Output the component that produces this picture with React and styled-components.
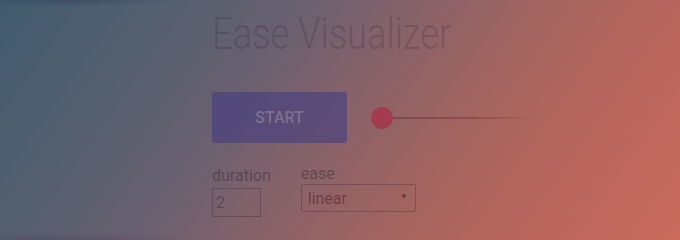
import React from "react";
import styled, { createGlobalStyle } from "styled-components";

const GlobalStyle = createGlobalStyle`
  html, body {
    margin: 0;
    padding: 0;
  }
  body {
    font-family: "Roboto", "Liberation Sans", sans-serif;
  }
`;

const Page = styled.main`
  box-sizing: border-box;
  width: 100%;
  height: 240px;
  overflow: hidden;
  padding: 8px 0 0 212px;
  background:
    radial-gradient(ellipse 110px 6px at 70px 0px, rgba(35, 40, 75, 0.3), transparent),
    radial-gradient(ellipse 150px 8px at 60px 240px, rgba(70, 45, 75, 0.25), transparent),
    linear-gradient(125deg, #405a6e 0%, #55606f 20%, #686070 35%, #886269 50%, #a3645f 65%, #b8665d 80%, #c96a5c 100%);
`;

const Title = styled.h1`
  margin: 0 0 32px 0;
  font-size: 44px;
  line-height: 52px;
  font-weight: 300;
  color: rgba(40, 35, 55, 0.22);
  transform: scaleX(0.825);
  transform-origin: left center;
  white-space: nowrap;
`;

const ControlRow = styled.div`
  display: flex;
  align-items: center;
  gap: 24px;
`;

const StartButton = styled.button`
  width: 135px;
  height: 51px;
  border: none;
  border-radius: 3px;
  background: rgba(66, 60, 130, 0.6);
  color: rgba(160, 145, 160, 0.55);
  font-family: "Roboto", "Liberation Sans", sans-serif;
  font-size: 16px;
  font-weight: 500;
  text-transform: uppercase;
`;

const Track = styled.div`
  display: flex;
  align-items: center;
`;

const Knob = styled.span`
  width: 22px;
  height: 22px;
  border-radius: 50%;
  background: #a43c50;
`;

const Rail = styled.span`
  width: 145px;
  height: 2px;
  background: linear-gradient(90deg, rgba(110, 40, 60, 0.5), rgba(110, 40, 60, 0.35) 60%, transparent);
`;

const Fields = styled.div`
  display: flex;
  align-items: flex-start;
  gap: 30px;
  margin-top: 23px;
`;

const Field = styled.label`
  display: flex;
  flex-direction: column;
  margin-top: ${(p) => p.$lift || 0}px;
`;

const FieldLabel = styled.span`
  font-size: 16px;
  line-height: 19px;
  color: rgba(40, 30, 50, 0.42);
  margin-bottom: ${(p) => p.$gap || 3}px;
`;

const NumberBox = styled.div`
  box-sizing: border-box;
  width: 49px;
  height: 29px;
  border: 1px solid rgba(60, 40, 55, 0.35);
  padding: 3px 3px;
  font-size: 16px;
  line-height: 21px;
  color: rgba(40, 30, 50, 0.4);
`;

const SelectBox = styled.div`
  box-sizing: border-box;
  width: 115px;
  height: 28px;
  display: flex;
  align-items: center;
  justify-content: space-between;
  border: 1px solid rgba(60, 40, 55, 0.35);
  border-radius: 2px;
  padding: 0 7px 0 6px;
  font-size: 16px;
  color: rgba(90, 30, 50, 0.6);
`;

const Caret = styled.span`
  font-size: 8px;
  color: rgba(40, 20, 35, 0.55);
  margin-top: -4px;
`;

export default function App() {
  return (
    <>
      <GlobalStyle />
      <Page>
        <Title>Ease Visualizer</Title>
        <ControlRow>
          <StartButton>Start</StartButton>
          <Track>
            <Knob />
            <Rail />
          </Track>
        </ControlRow>
        <Fields>
          <Field>
            <FieldLabel>duration</FieldLabel>
            <NumberBox>2</NumberBox>
          </Field>
          <Field $lift={-2}>
            <FieldLabel $gap={1}>ease</FieldLabel>
            <SelectBox>
              <span>linear</span>
              <Caret>▼</Caret>
            </SelectBox>
          </Field>
        </Fields>
      </Page>
    </>
  );
}
